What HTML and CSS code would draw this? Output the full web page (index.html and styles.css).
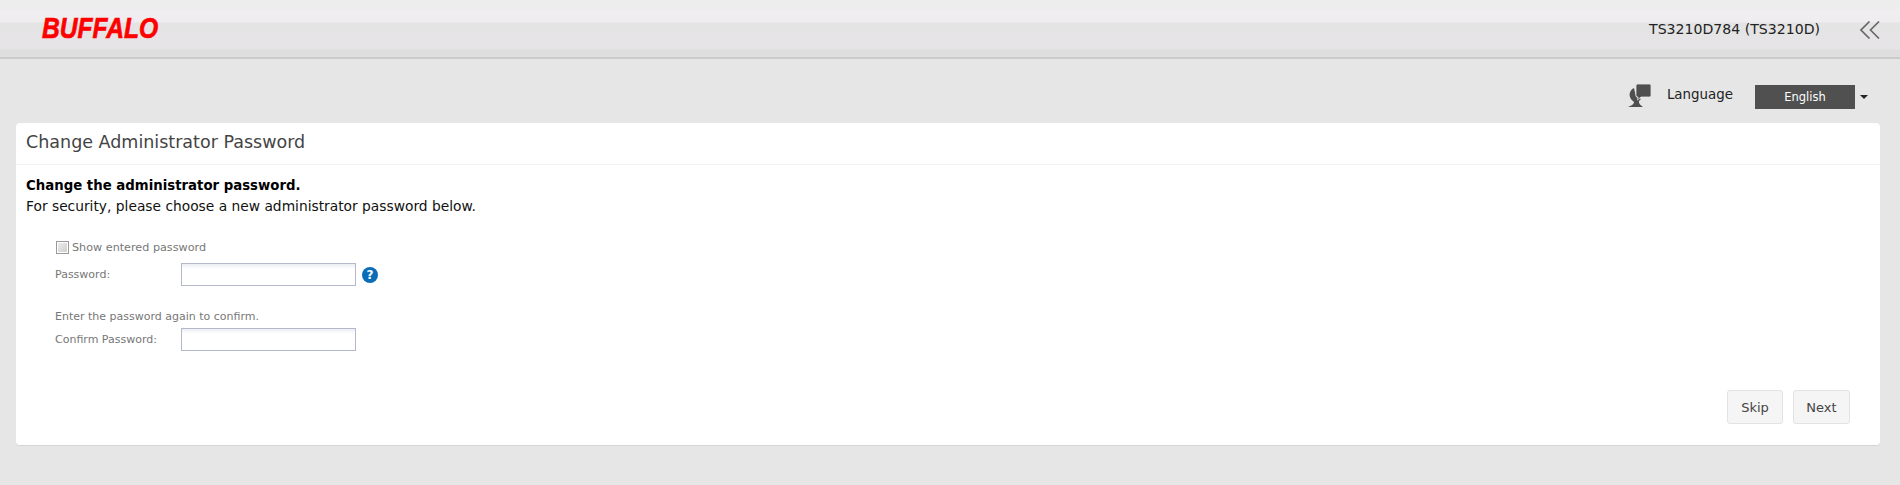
FILE: index.html
```html
<!DOCTYPE html>
<html lang="en">
<head>
    <meta charset="UTF-8">
    <title>Change Administrator Password</title>
    <link rel="stylesheet" href="styles.css">
</head>
<body>
    <header class="top-bar">
        <div class="logo">BUFFALO</div>
        <div class="device-name">TS3210D784 (TS3210D)</div>
        <svg class="collapse-icon" width="20" height="18" viewBox="0 0 20 18">
            <path d="M9.500 0.500 L1 9 L9.500 17.500 M19 0.500 L10.500 9 L19 17.500" fill="none" stroke="#666" stroke-width="1.6"/>
        </svg>
    </header>

    <div class="language-row">
        <svg class="language-icon" width="23" height="23" viewBox="0 0 23 23">
            <path d="M6 4 C2 6 1 10 2 13 C3 16 5 17 6 18 C6 20 3 22 0 23 L15 23 C12 21 10.500 19 11 17 L13 15 L8 13 Z" fill="#4f4f4f"/>
            <path d="M9 0 L22 0 L23 1 L23 12 L22 13 L13 13 L9.500 16 L10 13 L9 13 L8 12 L8 1 Z" fill="#4f4f4f" stroke="#e6e6e6" stroke-width="0.8"/>
        </svg>
        <span class="language-label">Language</span>
        <div class="language-select">English</div>
        <span class="select-arrow"></span>
    </div>

    <main class="panel">
        <h1 class="panel-title">Change Administrator Password</h1>
        <div class="panel-body">
            <p class="intro-strong">Change the administrator password.</p>
            <p class="intro">For security, please choose a new administrator password below.</p>

            <div class="form-block">
                <label class="show-row"><span class="fake-check"></span>Show entered password</label>
                <div class="form-row">
                    <span class="form-label">Password:</span>
                    <input class="text-input" type="password">
                    <span class="help-icon">?</span>
                </div>
                <p class="confirm-hint">Enter the password again to confirm.</p>
                <div class="form-row confirm-row">
                    <span class="form-label">Confirm Password:</span>
                    <input class="text-input" type="password">
                </div>
            </div>

            <div class="button-row">
                <button class="btn btn-skip">Skip</button>
                <button class="btn btn-next">Next</button>
            </div>
        </div>
    </main>
</body>
</html>
```

FILE: styles.css
```css
body {
    font-family: "DejaVu Sans", Verdana, sans-serif;
    background: #e6e6e6;
    margin: 0;
    padding: 0;
    height: 485px;
    overflow: hidden;
    color: #000;
}
.top-bar {
    height: 57px;
    display: flex;
    align-items: center;
    padding: 0 20px 0 42px;
    border-bottom: 2px solid #cbcbcb;
    background: linear-gradient(#ededed 0, #ededed 9px, #f0eef0 10px, #efedef 22px, #e4e4e4 23px, #e7e4e7 49px, #dedede 50px);
}
.logo {
    font-family: "Liberation Sans", Arial, sans-serif;
    font-size: 30px;
    font-weight: bold;
    font-style: italic;
    color: #f00;
    -webkit-text-stroke: 0.7px #f00;
    line-height: 22px;
    margin-top: -1px;
    transform: scaleX(0.82);
    transform-origin: left center;
}
.device-name {
    margin-left: auto;
    font-size: 14.100px;
    color: #222;
}
.collapse-icon {
    margin-left: 40px;
    margin-top: 2px;
}
.language-row {
    height: 64px;
    box-sizing: border-box;
    display: flex;
    align-items: flex-start;
    padding: 26px 32px 0 0;
    justify-content: flex-end;
}
.language-icon {
    margin-right: 16px;
    margin-top: -1px;
}
.language-label {
    font-size: 13.400px;
    line-height: 20px;
    color: #222;
    margin-right: 22px;
}
.language-select {
    width: 100px;
    height: 24px;
    line-height: 24px;
    background: #505050;
    color: #fff;
    font-size: 11.500px;
    text-align: center;
}
.select-arrow {
    margin: 10px 0 0 5px;
    border-left: 4px solid transparent;
    border-right: 4px solid transparent;
    border-top: 4px solid #222;
}
.panel {
    background: #fff;
    margin: 0 20px 0 16px;
    height: 323px;
    border-radius: 4px;
    border-bottom: 1px solid #d5d5d5;
    box-sizing: border-box;
}
.panel-title {
    margin: 0;
    height: 42px;
    line-height: 39px;
    padding-left: 10px;
    font-size: 17.500px;
    font-weight: normal;
    color: #444;
    border-bottom: 1px solid #f2f2f2;
    box-sizing: border-box;
}
.panel-body {
    padding: 0 10px;
}
.intro-strong {
    margin: 10px 0 0;
    font-size: 13.300px;
    line-height: 21px;
    font-weight: bold;
}
.intro {
    margin: 0;
    font-size: 13.800px;
    line-height: 21px;
    color: #111;
}
.form-block {
    padding: 21px 0 0 29px;
    font-size: 11px;
    color: #777;
}
.show-row {
    display: flex;
    align-items: center;
    height: 18px;
    font-size: 11.200px;
}
.fake-check {
    width: 13px;
    height: 13px;
    box-sizing: border-box;
    margin: 0 3px 0 1px;
    border: 1px solid #999;
    background: linear-gradient(135deg, #eee, #ccc);
    box-shadow: inset 0 0 0 1px #fff;
}
.form-row {
    display: flex;
    align-items: center;
    margin-top: 7px;
}
.form-label {
    width: 126px;
}
.text-input {
    width: 175px;
    height: 23px;
    padding: 0;
    border: 1px solid #b5b8c8;
    background: linear-gradient(#eceef4, #fff 5px);
    box-sizing: border-box;
    margin: 0;
}
.help-icon {
    width: 16px;
    height: 16px;
    margin-left: 6px;
    border-radius: 50%;
    background: #0b6cb8;
    color: #fff;
    font-size: 12px;
    font-weight: bold;
    line-height: 16px;
    text-align: center;
}
.confirm-hint {
    margin: 23px 0 0;
    line-height: 15px;
}
.confirm-row {
    margin-top: 4px;
}
.button-row {
    display: flex;
    justify-content: flex-end;
    gap: 10px;
    padding-right: 20px;
    margin-top: 39px;
}
.btn {
    height: 34px;
    padding: 0;
    background: #f5f5f5;
    border: 1px solid #e3e3e3;
    border-radius: 3px;
    color: #444;
    font-family: inherit;
    font-size: 13px;
}
.btn-skip {
    width: 56px;
}
.btn-next {
    width: 57px;
}
```
